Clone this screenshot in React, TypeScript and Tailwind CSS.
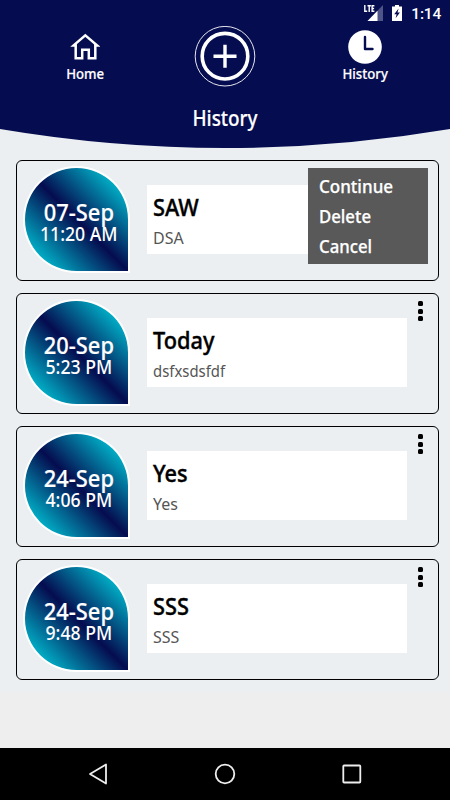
import React from 'react';
import { clsx } from 'clsx';

interface HistoryItem {
  date: string;
  time: string;
  title: string;
  note: string;
  noteClass?: string;
  menuOpen?: boolean;
}

const items: HistoryItem[] = [
  { date: '07-Sep', time: '11:20 AM', title: 'SAW', note: 'DSA', menuOpen: true },
  {
    date: '20-Sep',
    time: '5:23 PM',
    title: 'Today',
    note: 'dsfxsdsfdf',
    noteClass: 'scale-x-[0.875]'
  },
  { date: '24-Sep', time: '4:06 PM', title: 'Yes', note: 'Yes' },
  { date: '24-Sep', time: '9:48 PM', title: 'SSS', note: 'SSS' }
];

const StatusBar: React.FC = () => (
  <div className="flex h-[26px] items-start justify-end pr-[9px] pt-[5px] text-white">
    <svg width="20" height="16" viewBox="0 0 20 16" className="mr-[8px]">
      <path d="M19 0V16H3.5Z" fill="#4f5488" />
      <path d="M13.5 5.8V16H3.5Z" fill="#fff" />
      <path d="M0 0H12V4L9 7.5H0Z" fill="#050c4f" />
      <path
        d="M.8 0V6.2H3.2M3.5 .8H6.9M5.2 .8V6.9M10.4 .8H8.1V6.2H10.4M8.1 3.5H10.1"
        fill="none"
        stroke="#fff"
        strokeWidth="1.4"
      />
    </svg>
    <svg width="10" height="16" viewBox="0 0 10 16" className="mr-[9px]">
      <path d="M3 0H7V1.5H10V16H0V1.5H3Z" fill="#fff" />
      <path d="M6.6 3.4L2.2 9.2H4.6L3.6 13.2L7.9 7.5H5.5Z" fill="#050c4f" />
    </svg>
    <span className="font-[Roboto] text-[15.5px] font-medium leading-[18px] tracking-[-0.2px]">
      1:14
    </span>
  </div>
);

const Header: React.FC = () => (
  <header className="relative h-[148px]">
    <svg className="absolute inset-0" width="450" height="149" viewBox="0 0 450 149">
      <path d="M0 0H450V129Q225 167 0 129Z" fill="#050c4f" />
    </svg>
    <div className="relative">
      <StatusBar />
      <div className="grid h-[61px] grid-cols-[170px_110px_170px] text-white">
        <div className="flex flex-col items-center pt-[7px]">
          <svg width="30" height="27" viewBox="0 0 30 27">
            <path
              d="M3.6 12.4L15.3 2.4L27 12.4H25.3V25.3H18.8V16.8H12.2V25.3H5.7V12.4Z"
              fill="none"
              stroke="#fff"
              strokeWidth="2.5"
            />
          </svg>
          <span className="mt-[4px] scale-x-[0.94] text-[14px] font-medium leading-[20px] [-webkit-text-stroke:0.2px_white]">
            Home
          </span>
        </div>
        <div className="flex justify-center">
          <svg width="62" height="62" viewBox="0 0 62 62">
            <circle cx="31" cy="30.2" r="29.8" fill="none" stroke="#fff" strokeWidth="0.9" />
            <circle cx="31" cy="30.2" r="22.8" fill="none" stroke="#fff" strokeWidth="3.6" />
            <path d="M31 18.8V41.8M19.5 30.3H42.5" stroke="#fff" strokeWidth="3.4" />
          </svg>
        </div>
        <div className="flex flex-col items-center pt-[4px]">
          <svg width="34" height="34" viewBox="0 0 34 34">
            <circle cx="17" cy="17" r="16.8" fill="#fff" />
            <path
              d="M17 7V19H24.5"
              fill="none"
              stroke="#050c4f"
              strokeWidth="2.4"
              strokeLinecap="round"
              strokeLinejoin="round"
            />
          </svg>
          <span className="scale-x-[0.94] text-[14px] font-medium leading-[20px] [-webkit-text-stroke:0.2px_white]">
            History
          </span>
        </div>
      </div>
      <h1 className="scale-x-[0.9] pt-[17px] text-center text-[21px] font-medium leading-[29px] text-white [-webkit-text-stroke:0.2px_white]">
        History
      </h1>
    </div>
  </header>
);

const PopupMenu: React.FC = () => (
  <ul className="absolute right-[10.5px] top-[6.5px] h-24 w-[120px] bg-[#595959] pl-[11px] pt-[3px] text-[18px] font-medium leading-[30px] text-white [-webkit-text-stroke:0.25px_white]">
    <li className="origin-left scale-x-[0.945]">Continue</li>
    <li className="origin-left scale-x-[0.93]">Delete</li>
    <li className="origin-left scale-x-[0.93]">Cancel</li>
  </ul>
);

const HistoryCard: React.FC<{ item: HistoryItem }> = ({ item }) => (
  <article className="relative flex h-[121px] rounded-[6px] border-[1.5px] border-black pl-[6px] pt-[5px]">
    <div className="flex h-[107px] w-[107px] flex-col items-center rounded-full rounded-br-[5px] border-2 border-white bg-[linear-gradient(45deg,#00bed2_12%,#050c4f_50%,#00bed2_88%)] bg-origin-border pl-[5px] pt-[33px] text-white">
      <span className="scale-x-[0.95] text-[23px] font-medium leading-[23px] [-webkit-text-stroke:0.2px_white]">
        {item.date}
      </span>
      <span className="scale-x-[0.93] whitespace-nowrap text-[19px] font-medium leading-[21px]">
        {item.time}
      </span>
    </div>
    <div className="ml-[17px] mt-[19px] h-[69px] w-[260px] bg-white pl-[6px] pt-[7px]">
      <div className="origin-left scale-x-[0.945] text-[23px] font-medium leading-[31px] text-black [-webkit-text-stroke:0.4px_black]">
        {item.title}
      </div>
      <div
        className={clsx(
          'origin-left text-[17px] leading-[30px] text-[#555]',
          item.noteClass ?? 'scale-x-[0.94]'
        )}
      >
        {item.note}
      </div>
    </div>
    {item.menuOpen ? (
      <PopupMenu />
    ) : (
      <button aria-label="More" className="ml-[11px] mt-[2px] flex h-[22px] flex-col gap-[2.5px]">
        <span className="h-[5px] w-[5px] rounded-[1.5px] bg-black" />
        <span className="h-[5px] w-[5px] rounded-[1.5px] bg-black" />
        <span className="h-[5px] w-[5px] rounded-[1.5px] bg-black" />
      </button>
    )}
  </article>
);

const NavBar: React.FC = () => (
  <nav className="flex h-[52px] items-center justify-between bg-black pl-[88px] pr-[88px]">
    <svg width="20" height="22" viewBox="0 0 20 22">
      <path
        d="M18 1.5V20.5L2 11Z"
        fill="none"
        stroke="#eee"
        strokeWidth="1.8"
        strokeLinejoin="round"
      />
    </svg>
    <svg width="22" height="22" viewBox="0 0 22 22">
      <circle cx="11" cy="11" r="9.3" fill="none" stroke="#eee" strokeWidth="1.8" />
    </svg>
    <svg width="20" height="20" viewBox="0 0 20 20">
      <rect x="1.3" y="1.5" width="17" height="17" rx=".8" fill="none" stroke="#eee" strokeWidth="1.8" />
    </svg>
  </nav>
);

const App: React.FC = () => (
  <div className="flex h-[800px] w-[450px] flex-col overflow-hidden bg-[#eeeeee] font-['Noto_Sans',sans-serif]">
    <div className="h-[692px] bg-[#ebeff1]">
      <Header />
      <main className="flex flex-col gap-3 pl-4 pr-[11px] pt-3">
        {items.map((item) => (
          <HistoryCard key={item.date + item.time} item={item} />
        ))}
      </main>
    </div>
    <div className="flex-1" />
    <NavBar />
  </div>
);

export default App;
